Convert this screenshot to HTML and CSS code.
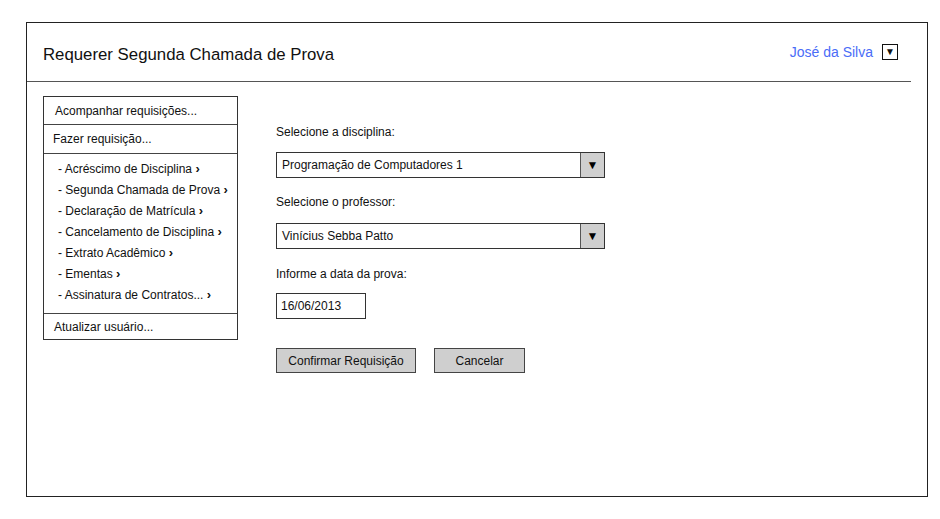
FILE: index.html
```html
<!DOCTYPE html>
<html lang="pt">
<head>
<meta charset="utf-8">
<title>Requerer Segunda Chamada de Prova</title>
<link rel="stylesheet" href="styles.css">
</head>
<body>
<div class="frame">
  <header class="header">
    <h1 class="title">Requerer Segunda Chamada de Prova</h1>
    <div class="user">
      <span class="user-name">José da Silva</span>
      <span class="user-drop">▼</span>
    </div>
  </header>
  <div class="content">
    <nav class="menu">
      <div class="menu-row first">Acompanhar requisições...</div>
      <div class="menu-row second">Fazer requisição...</div>
      <ul class="submenu">
        <li>- Acréscimo de Disciplina <b class="chev">›</b></li>
        <li>- Segunda Chamada de Prova <b class="chev">›</b></li>
        <li>- Declaração de Matrícula <b class="chev">›</b></li>
        <li>- Cancelamento de Disciplina <b class="chev">›</b></li>
        <li>- Extrato Acadêmico <b class="chev">›</b></li>
        <li>- Ementas <b class="chev">›</b></li>
        <li>- Assinatura de Contratos... <b class="chev">›</b></li>
      </ul>
      <div class="menu-row last">Atualizar usuário...</div>
    </nav>
    <main class="form">
      <div class="label l1">Selecione a disciplina:</div>
      <div class="select s1"><span class="select-text">Programação de Computadores 1</span><span class="select-btn">▼</span></div>
      <div class="label l2">Selecione o professor:</div>
      <div class="select s2"><span class="select-text">Vinícius Sebba Patto</span><span class="select-btn">▼</span></div>
      <div class="label l3">Informe a data da prova:</div>
      <div class="input">16/06/2013</div>
      <div class="buttons">
        <div class="btn btn-confirm">Confirmar Requisição</div>
        <div class="btn btn-cancel">Cancelar</div>
      </div>
    </main>
  </div>
</div>
</body>
</html>
```
FILE: styles.css
```css
* { box-sizing: border-box; }
body {
  margin: 0;
  background: #fff;
  font-family: "Liberation Sans", Arial, sans-serif;
  font-size: 12px;
  color: #111;
}
.frame {
  margin: 22px 0 0 26px;
  width: 902px;
  height: 475px;
  border: 1.5px solid #222;
  display: flex;
  flex-direction: column;
}
.header {
  height: 59px;
  margin-right: 16px;
  border-bottom: 1.5px solid #555;
  display: flex;
  align-items: center;
  justify-content: space-between;
  padding: 5px 13px 0 16px;
}
.title {
  margin: 0;
  font-size: 16.8px;
  font-weight: normal;
}
.user {
  display: flex;
  align-items: center;
  gap: 9px;
  margin-top: -6px;
}
.user-name {
  color: #4a6cf7;
  font-size: 14px;
}
.user-drop {
  width: 16px;
  height: 16px;
  border: 1.5px solid #111;
  font-size: 10px;
  display: flex;
  align-items: center;
  justify-content: center;
  line-height: 1;
}
.content {
  display: flex;
  padding: 14px 0 0 16px;
  gap: 38px;
}
.menu {
  width: 195px;
  border: 1.5px solid #333;
  display: flex;
  flex-direction: column;
  align-self: flex-start;
}
.menu-row {
  border-bottom: 1.5px solid #444;
  display: flex;
  align-items: center;
}
.menu-row.first { height: 28px; padding-left: 11px; }
.menu-row.second { height: 29px; padding-left: 9px; }
.menu-row.last { height: 25px; padding-left: 10px; border-bottom: none; }
.submenu {
  list-style: none;
  margin: 0;
  padding: 4px 0 8px 14px;
  border-bottom: 1.5px solid #444;
}
.submenu li {
  height: 21px;
  line-height: 21px;
  white-space: nowrap;
}
.chev {
  font-size: 13px;
  font-weight: bold;
}
.form {
  display: flex;
  flex-direction: column;
  align-items: flex-start;
  padding-top: 27px;
}
.label {
  height: 18px;
  line-height: 18px;
}
.l1 { margin-bottom: 11px; }
.l2 { margin-top: 15px; margin-bottom: 12px; }
.l3 { margin-top: 16px; margin-bottom: 10px; }
.select {
  width: 329px;
  height: 26px;
  border: 1.5px solid #333;
  display: flex;
  align-items: stretch;
}
.select-text {
  flex: 1;
  display: flex;
  align-items: center;
  padding-left: 5px;
}
.select-btn {
  width: 24px;
  border-left: 1.5px solid #555;
  background: #cfcfcf;
  display: flex;
  align-items: center;
  justify-content: center;
  font-size: 12px;
  color: #000;
}
.input {
  width: 90px;
  height: 26px;
  border: 1.5px solid #333;
  display: flex;
  align-items: center;
  padding-left: 4px;
}
.buttons {
  display: flex;
  gap: 18px;
  margin-top: 29px;
}
.btn {
  height: 25px;
  border: 1.5px solid #444;
  background: #cfcfcf;
  display: flex;
  align-items: center;
  justify-content: center;
}
.btn-confirm { width: 140px; }
.btn-cancel { width: 91px; }
```
